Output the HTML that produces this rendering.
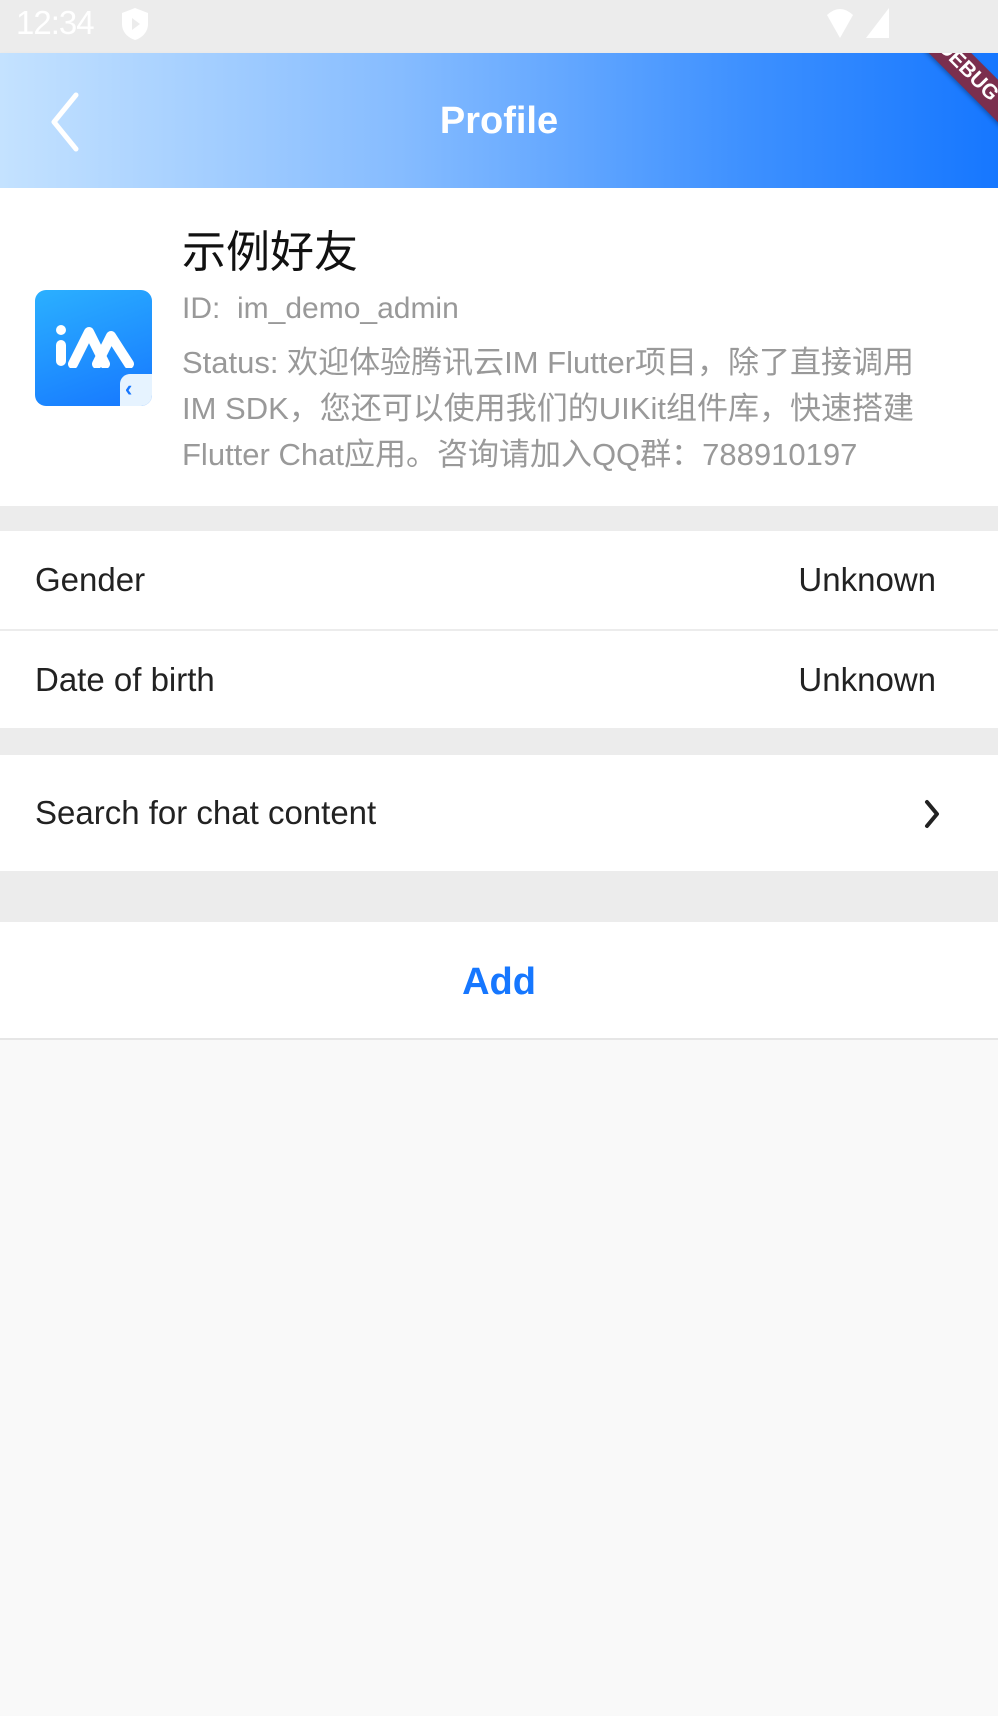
<!DOCTYPE html>
<html><head><meta charset="utf-8"><style>
*{margin:0;padding:0;box-sizing:border-box}
body{width:998px;height:1716px;background:#f9f9f9;font-family:"Liberation Sans","Noto Sans CJK SC",sans-serif;position:relative;overflow:hidden}
.abs{position:absolute}
#status{left:0;top:0;width:998px;height:53px;background:#ececec}
#appbar{left:0;top:53px;width:998px;height:135px;background:linear-gradient(90deg,#c4e2ff 0%,#86bcff 40%,#3d90ff 75%,#1677ff 100%);overflow:hidden;box-shadow:0 3px 5px rgba(0,0,0,.12)}
.row{position:absolute;left:0;width:998px;background:#fff}
.lbl{position:absolute;left:35px;font-size:33px;color:#222}
.val{position:absolute;right:62px;font-size:33px;color:#222}
</style></head><body>
<div id="status" class="abs">
 <div class="abs" style="left:16px;top:4px;color:#fff;font-size:33px;letter-spacing:-1px">12:34</div>
 <svg class="abs" style="left:121px;top:7px" width="28" height="34" viewBox="0 0 28 34"><path d="M14 1 L27 6 V17 C27 25 21 31 14 33 C7 31 1 25 1 17 V6Z" fill="#fff"/><path d="M11 11 L19 17 L11 23Z" fill="#ececec"/></svg>
 <svg class="abs" style="left:826px;top:7px" width="70" height="32" viewBox="0 0 70 32"><path d="M1 8 Q14 -4 27 8 L14 31Z" fill="#fff"/><path d="M63 1 V31 H40Z" fill="#fff"/></svg>
</div>
<div id="appbar" class="abs">
 <svg class="abs" style="left:46px;top:38px" width="36" height="62" viewBox="0 0 36 62"><path d="M30 4 L8 31 L30 58" stroke="#fff" stroke-width="5" fill="none" stroke-linecap="round" stroke-linejoin="round"/></svg>
 <div class="abs" style="left:0;width:998px;top:47px;text-align:center;color:#fff;font-size:38px;font-weight:bold">Profile</div>
 <div class="abs" style="left:868px;top:3px;width:200px;height:30px;background:#7b2f4e;transform:rotate(45deg);color:#fff;font-size:21px;font-weight:bold;text-align:center;line-height:30px;box-shadow:0 2px 4px rgba(0,0,0,.3)">DEBUG</div>
</div>
<div class="row" style="top:188px;height:318px">
 <div class="abs" style="left:35px;top:102px;width:117px;height:116px;border-radius:11px;background:linear-gradient(160deg,#2bb0ff,#1677ff);overflow:hidden">
  <svg class="abs" style="left:18px;top:34px" width="84" height="44" viewBox="0 0 84 44"><circle cx="8" cy="6" r="5" fill="#fff"/><rect x="3" y="16" width="10" height="26" rx="5" fill="#fff"/><path d="M20 40 L36 8 L52 40 M44 40 L58 12 L76 40" stroke="#fff" stroke-width="10" fill="none" stroke-linecap="round" stroke-linejoin="round"/></svg>
  <div class="abs" style="left:85px;top:84px;width:40px;height:40px;border-radius:10px 0 0 0;background:#e6f3ff"></div>
  <div class="abs" style="left:90px;top:86px;color:#1677ff;font-weight:bold;font-size:22px">‹</div>
 </div>
 <div class="abs" style="left:182px;top:28px;font-size:44px;color:#111">示例好友</div>
 <div class="abs" style="left:182px;top:104px;font-size:30px;color:#999">ID:&nbsp; im_demo_admin</div>
 <div class="abs" style="left:182px;top:152px;width:800px;font-size:31px;line-height:46px;color:#999;white-space:nowrap">Status: 欢迎体验腾讯云IM Flutter项目，除了直接调用<br>IM SDK，您还可以使用我们的UIKit组件库，快速搭建<br>Flutter Chat应用。咨询请加入QQ群：788910197</div>
</div>
<div class="abs" style="left:0;top:506px;width:998px;height:25px;background:#ececec"></div>
<div class="row" style="top:531px;height:98px"><div class="lbl" style="top:30px">Gender</div><div class="val" style="top:30px">Unknown</div></div>
<div class="abs" style="left:0;top:629px;width:998px;height:2px;background:#ececec"></div>
<div class="row" style="top:631px;height:97px"><div class="lbl" style="top:30px">Date of birth</div><div class="val" style="top:30px">Unknown</div></div>
<div class="abs" style="left:0;top:728px;width:998px;height:27px;background:#ececec"></div>
<div class="row" style="top:755px;height:116px"><div class="lbl" style="top:39px">Search for chat content</div>
 <svg class="abs" style="left:921px;top:44px" width="22" height="30" viewBox="0 0 22 30"><path d="M6 3 L16 15 L6 27" stroke="#222" stroke-width="4" fill="none" stroke-linecap="round" stroke-linejoin="round"/></svg></div>
<div class="abs" style="left:0;top:871px;width:998px;height:51px;background:#ececec"></div>
<div class="row" style="top:922px;height:118px;border-bottom:2px solid #e6e6e6"><div class="abs" style="left:0;width:998px;top:39px;text-align:center;color:#1677ff;font-size:38px;font-weight:bold">Add</div></div>
</body></html>
